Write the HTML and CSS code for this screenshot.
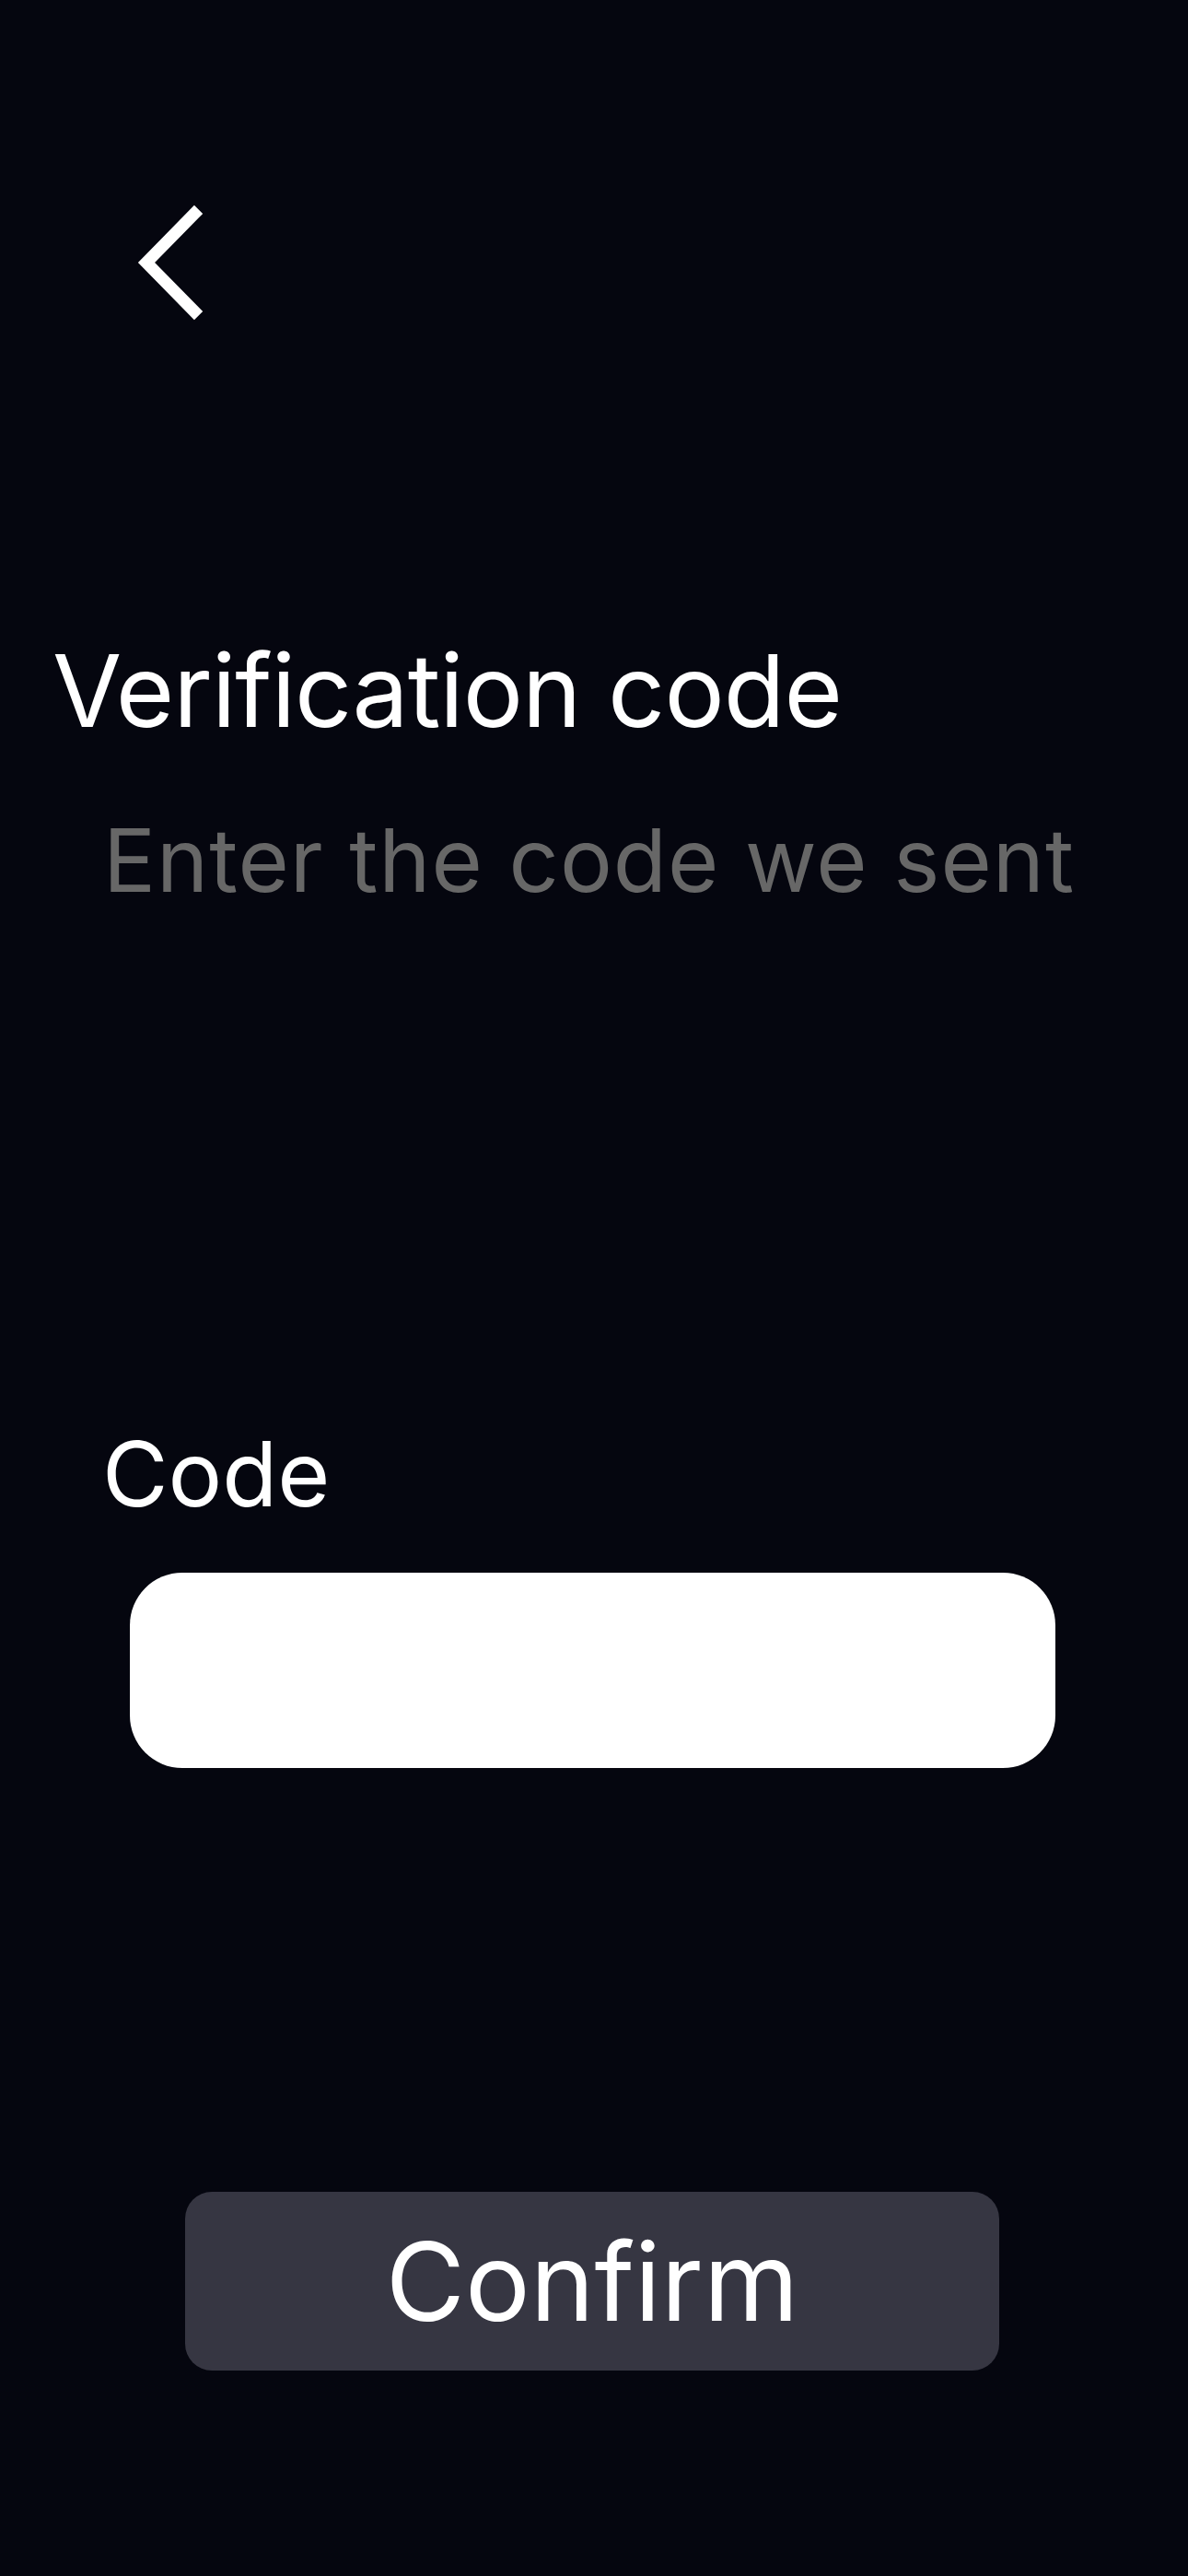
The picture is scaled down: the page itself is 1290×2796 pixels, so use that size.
FILE: index.html
```html
<!DOCTYPE html>
<html lang="en">
<head>
<meta charset="utf-8">
<title>Verification code</title>
<link rel="stylesheet" href="styles.css">
</head>
<body>
<main class="screen">
  <header class="topbar">
    <button class="back" aria-label="Back">
      <svg class="back-icon" width="80" height="130" viewBox="0 0 80 130">
        <polyline points="71,12 19,65 71,118" fill="none" stroke="#ffffff" stroke-width="13" stroke-linecap="square" stroke-linejoin="miter"/>
      </svg>
    </button>
  </header>
  <section class="intro">
    <h1 class="title">Verification code</h1>
    <p class="subtitle">Enter the code we sent</p>
  </section>
  <section class="field">
    <label class="label" for="code">Code</label>
    <div class="input-wrap">
      <input id="code" class="input" type="text" inputmode="numeric">
    </div>
  </section>
  <div class="actions">
    <button class="confirm">Confirm</button>
  </div>
</main>
</body>
</html>
```

FILE: styles.css
```css
html, body {
  margin: 0;
  padding: 0;
  background: #05060f;
}
body {
  font-family: Inter, "Noto Sans", sans-serif;
  color: #ffffff;
}
.screen {
  width: 1290px;
  min-height: 2796px;
  display: flex;
  flex-direction: column;
}
.topbar {
  padding: 220px 0 0 140px;
  height: 130px;
}
.back {
  background: none;
  border: 0;
  padding: 0;
  margin: 0;
  display: block;
  cursor: pointer;
}
.back-icon {
  display: block;
  overflow: visible;
}
.intro {
  padding-top: 345px;
}
.title {
  margin: 0;
  padding-left: 57px;
  font-size: 109px;
  font-weight: 400;
  line-height: 1;
  letter-spacing: -1px;
}
.subtitle {
  margin: 0;
  padding: 82px 0 0 112px;
  font-size: 95px;
  font-weight: 400;
  line-height: 1;
  color: #676767;
  letter-spacing: 1px;
}
.field {
  padding-top: 570px;
}
.label {
  display: block;
  padding-left: 111px;
  font-size: 98px;
  line-height: 1;
}
.input-wrap {
  padding: 58px 0 0 141px;
}
.input {
  display: block;
  box-sizing: border-box;
  width: 1005px;
  height: 212px;
  border: 0;
  border-radius: 57px;
  background: #ffffff;
  margin: 0;
  padding: 0 50px;
  font: inherit;
  font-size: 80px;
  color: #05060f;
  outline: none;
}
.actions {
  padding: 460px 0 0 201px;
}
.confirm {
  display: block;
  width: 884px;
  height: 194px;
  border: 0;
  border-radius: 29px;
  background: #363642;
  color: #ffffff;
  font-family: Inter, "Noto Sans", sans-serif;
  font-size: 118px;
  font-weight: 400;
  line-height: 1;
  padding: 0;
  margin: 0;
}
```
